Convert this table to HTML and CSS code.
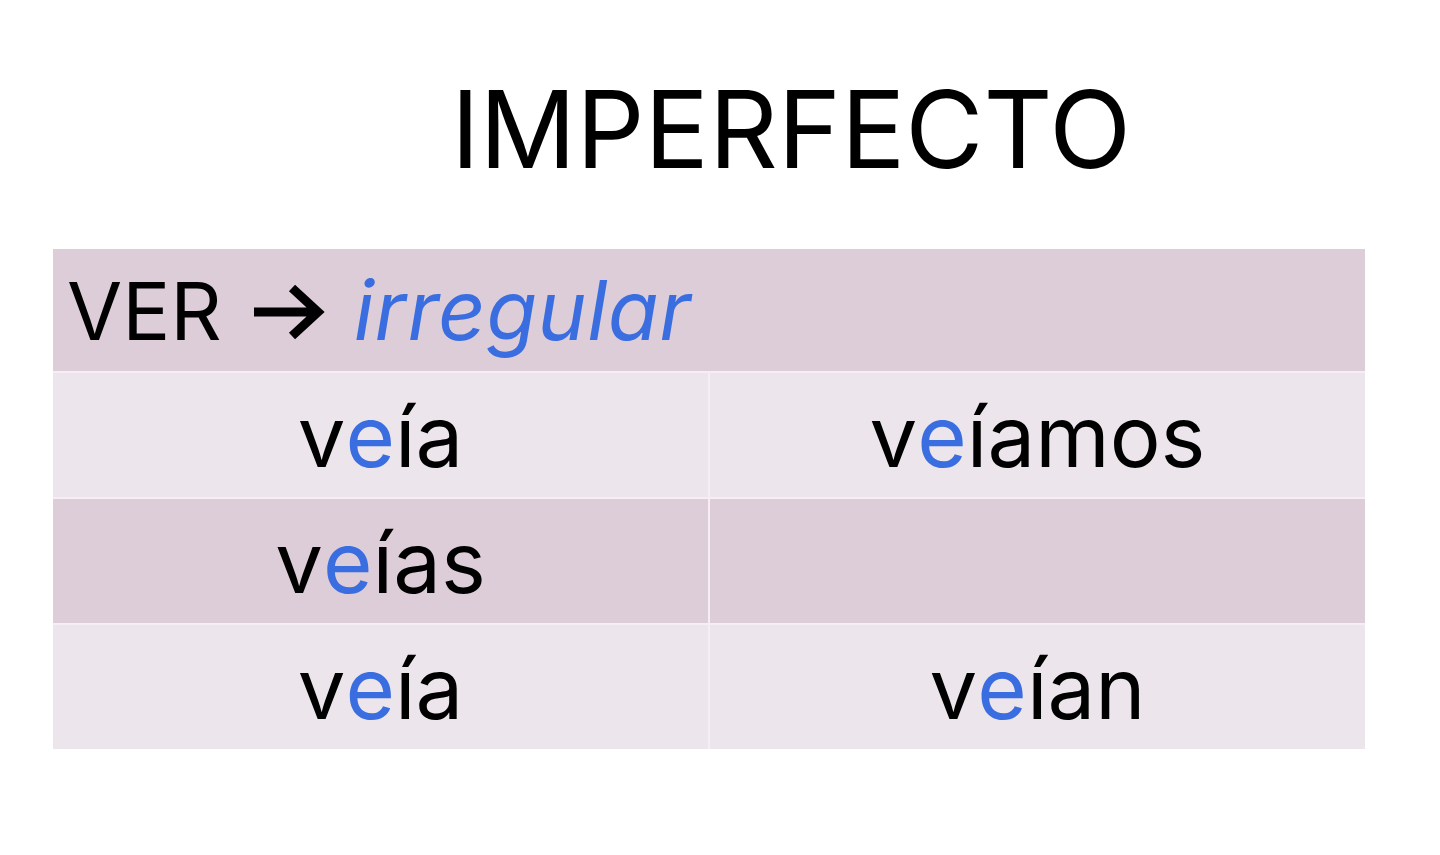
FILE: index.html
```html
<!DOCTYPE html>
<html lang="es">
<head>
<meta charset="utf-8">
<link rel="stylesheet" href="styles.css">
</head>
<body>
<div class="page">
  <h1 class="title">IMPERFECTO</h1>
  <div class="table">
    <div class="head">
      <span class="verb">VER</span>
      <svg class="arrow" viewBox="0 0 76 56" width="76" height="56"><path d="M4 28 H66 M42 4 L68 28 L42 52" fill="none" stroke="#000" stroke-width="9" stroke-linejoin="miter"/></svg>
      <span class="irr">irregular</span>
    </div>
    <div class="row light">
      <div class="cell">v<span class="b">e</span>ía</div>
      <div class="cell">v<span class="b">e</span>íamos</div>
    </div>
    <div class="row dark">
      <div class="cell">v<span class="b">e</span>ías</div>
      <div class="cell"></div>
    </div>
    <div class="row light">
      <div class="cell">v<span class="b">e</span>ía</div>
      <div class="cell">v<span class="b">e</span>ían</div>
    </div>
  </div>
</div>
</body>
</html>
```
FILE: styles.css
```css
html, body {
  margin: 0;
  padding: 0;
  background: #ffffff;
}
.page {
  width: 1440px;
  height: 855px;
  font-family: Inter, "Liberation Sans", sans-serif;
  color: #000;
}
.title {
  margin: 0;
  padding: 64px 0 0 142px;
  height: 249px;
  box-sizing: border-box;
  text-align: center;
  font-weight: 400;
  font-size: 107px;
  line-height: 130px;
  letter-spacing: 0;
}
.table {
  margin-left: 53px;
  width: 1312px;
  display: flex;
  flex-direction: column;
  gap: 2px;
  background: #f7eef5;
}
.head {
  height: 122px;
  background: #dccdd9;
  display: flex;
  align-items: center;
  padding-left: 14px;
  font-size: 80px;
}
.arrow {
  margin: 0 28px 0 28px;
  position: relative;
  top: 2px;
}
.irr {
  color: #3a6ee0;
  font-style: italic;
  font-size: 83px;
  letter-spacing: 0.5px;
}
.row {
  height: 124px;
  display: grid;
  grid-template-columns: 655px 655px;
  column-gap: 2px;
}
.cell {
  display: flex;
  align-items: center;
  justify-content: center;
  font-size: 85px;
  padding-top: 2px;
  box-sizing: border-box;
}
.light .cell { background: #ede5ec; }
.dark .cell { background: #dccdd9; }
.b { color: #3a6ee0; }
```
